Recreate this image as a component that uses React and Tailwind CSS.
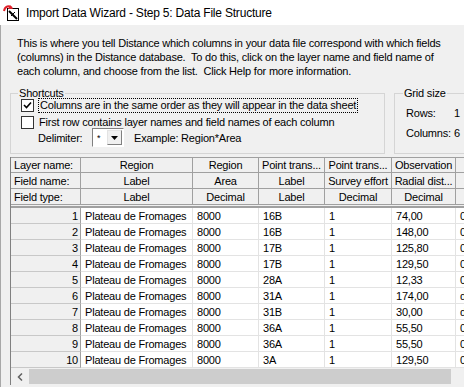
const colW = [
  "w-[70px]",
  "w-[112px]",
  "w-[66px]",
  "w-[66px]",
  "w-[67px]",
  "w-[64px]",
  "w-[60px]",
];

const header = [
  ["Layer name:", "Region", "Region", "Point trans...", "Point trans...", "Observation", "["],
  ["Field name:", "Label", "Area", "Label", "Survey effort", "Radial dist...", ""],
  ["Field type:", "Label", "Decimal", "Label", "Decimal", "Decimal", ""],
];

const rows = [
  ["16B", "74,00", "0"],
  ["16B", "148,00", "0"],
  ["17B", "125,80", "0"],
  ["17B", "129,50", "0"],
  ["28A", "12,33", "0"],
  ["31A", "174,00", "d"],
  ["31B", "30,00", "d"],
  ["36A", "55,50", "0"],
  ["36A", "55,50", "0"],
  ["3A", "129,50", "0"],
];

const WizardIcon = () => (
  <svg width="18" height="18" viewBox="0 0 18 18">
    <rect x="4.5" y="4.5" width="11" height="12" fill="#fff" stroke="#000" />
    <path d="M6 7 L14 15" stroke="#000" strokeWidth="2" />
    <path d="M8 12 L12 8" stroke="#000" strokeWidth="1" />
    <path d="M1 7 C2 2 6 1 9 4" stroke="#e0202a" strokeWidth="2" fill="none" />
    <path d="M7 1 L10 5 L5 5 Z" fill="#e0202a" />
  </svg>
);

const Checkbox = ({ checked }) => (
  <span className="w-[13px] h-[13px] border border-[#333] bg-white flex items-center justify-center shrink-0">
    {checked && (
      <svg width="9" height="9" viewBox="0 0 9 9">
        <path d="M1 4 L3.5 6.5 L8 1.5" stroke="#000" strokeWidth="1.6" fill="none" />
      </svg>
    )}
  </span>
);

export default function App() {
  return (
    <div className="w-[464px] h-[387px] overflow-hidden bg-[#f0f0f0] text-[11px] leading-[14px] tracking-[-0.2px] text-black font-['Liberation_Sans',Arial,sans-serif]">
      {/* title bar */}
      <div className="h-[25px] bg-white flex items-center pl-[3px] gap-[5px]">
        <WizardIcon />
        <span className="text-[12px] text-[#000]">
          Import Data Wizard - Step 5: Data File Structure
        </span>
      </div>

      <div className="border-l border-[#a8a8a8] h-[362px] pl-[9px] w-[560px]">
        <p className="pt-[11px] pl-[7px] whitespace-nowrap">
          This is where you tell Distance which columns in your data file correspond with which fields
          <br />
          (columns) in the Distance database.&nbsp; To do this, click on the layer name and field name of
          <br />
          each column, and choose from the list.&nbsp; Click Help for more information.
        </p>

        <div className="flex gap-[9px] mt-[8px]">
          <fieldset className="w-[375px] h-[68px] border border-[#d5d5d5] px-[10px]">
            <legend className="px-[1px] ml-[-3px]">Shortcuts</legend>
            <div className="flex items-center gap-[4px] mt-[-2px]">
              <Checkbox checked />
              <span className="border border-dotted border-black px-[1px] leading-[13px]">
                Columns are in the same order as they will appear in the data sheet
              </span>
            </div>
            <div className="flex items-center gap-[5px] mt-[2px]">
              <Checkbox />
              <span>First row contains layer names and field names of each column</span>
            </div>
            <div className="flex items-center mt-[-1px] pl-[17px]">
              <span className="w-[38px]">Delimiter:</span>
              <span className="ml-[16px] w-[32px] h-[19px] bg-white border border-t-[#808080] border-l-[#808080] border-b-white border-r-white flex items-center">
                <span className="text-[9px] pl-[4px] flex-1">*</span>
                <span className="w-[15px] h-[15px] bg-[#f0f0f0] border border-[#e3e3e3] border-b-[#808080] border-r-[#808080] flex items-center justify-center mr-[1px]">
                  <svg width="7" height="4" viewBox="0 0 7 4">
                    <path d="M0 0 H7 L3.5 4 Z" fill="#000" />
                  </svg>
                </span>
              </span>
              <span className="ml-[10px]">Example: Region*Area</span>
            </div>
          </fieldset>

          <fieldset className="w-[90px] h-[68px] border border-[#d5d5d5] px-[11px]">
            <legend className="px-[1px] ml-[-3px]">Grid size</legend>
            <div className="flex mt-[6px]">
              <span className="w-[48px]">Rows:</span>
              <span>1</span>
            </div>
            <div className="flex mt-[6px]">
              <span className="w-[48px]">Columns:</span>
              <span>6</span>
            </div>
          </fieldset>
        </div>

        {/* data grid */}
        <div className="mt-[3px] border-l border-[#808080]">
          {header.map((r, ri) => (
            <div key={ri} className="flex h-[16px]">
              {r.map((c, ci) => (
                <div
                  key={ci}
                  className={`${colW[ci]} shrink-0 border-r border-b border-[#a0a0a0] bg-[#f0f0f0] flex items-center whitespace-nowrap overflow-hidden ${
                    ci === 0 ? "pl-[3px]" : "justify-center"
                  } ${ri === 0 ? "border-t" : ""}`}
                >
                  {c}
                </div>
              ))}
            </div>
          ))}
          <div className="h-[3px] border-b-2 border-[#a0a0a0]" />
          {rows.map((r, i) => {
            const cells = [String(i + 1), "Plateau de Fromages", "8000", r[0], "1", r[1], r[2]];
            return (
              <div key={i} className="flex h-[16px]">
                {cells.map((c, ci) => (
                  <div
                    key={ci}
                    className={`${colW[ci]} shrink-0 border-r border-b flex items-center whitespace-nowrap overflow-hidden ${
                      ci === 0
                        ? "bg-[#f0f0f0] border-[#c8c8c8] border-r-[#a0a0a0] justify-end pr-[2px]"
                        : "bg-white border-[#e3e3e3] pl-[4px]"
                    }`}
                  >
                    {c}
                  </div>
                ))}
              </div>
            );
          })}
          {/* horizontal scrollbar */}
          <div className="flex h-[17px] bg-[#f0f0f0] items-center">
            <span className="w-[18px] flex items-center justify-center">
              <svg width="6" height="8" viewBox="0 0 6 8">
                <path d="M5 0.5 L1.5 4 L5 7.5" stroke="#606060" strokeWidth="1.5" fill="none" />
              </svg>
            </span>
            <span className="w-[422px] h-[15px] bg-[#cdcdcd]" />
          </div>
        </div>
      </div>
    </div>
  );
}
